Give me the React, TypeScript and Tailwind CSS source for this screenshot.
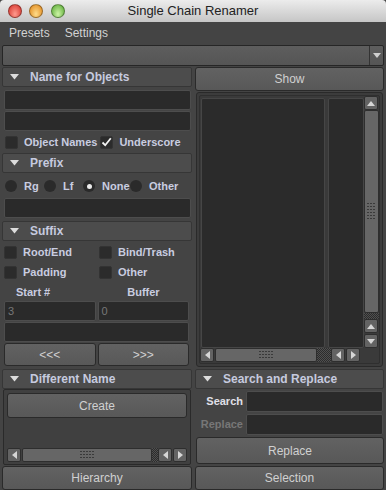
import clsx from 'clsx'

const LABEL = 'text-[11px] font-bold text-[#c9cde0]'

function Tri({ dir, color = '#d6d6d6' }: { dir: 'up' | 'down' | 'left' | 'right'; color?: string }) {
  const d = {
    up: 'M0 5L4 0L8 5z',
    down: 'M0 0h8L4 5z',
    left: 'M5 0v8L0 4z',
    right: 'M0 0v8L5 4z',
  }[dir]
  const vertical = dir === 'up' || dir === 'down'
  return (
    <svg width={vertical ? 8 : 5} height={vertical ? 5 : 8} viewBox={vertical ? '0 0 8 5' : '0 0 5 8'}>
      <path d={d} fill={color} />
    </svg>
  )
}

function Grip({ cols, rows }: { cols: number; rows: number }) {
  const dots = []
  for (let r = 0; r < rows; r++)
    for (let c = 0; c < cols; c++)
      dots.push(<rect key={`${r}-${c}`} x={c * 3} y={r * 3} width="2" height="1" fill="#3a3a3a" />)
  return (
    <svg width={cols * 3} height={rows * 3}>
      {dots}
    </svg>
  )
}

function ArrowBtn({ dir }: { dir: 'up' | 'down' | 'left' | 'right' }) {
  return (
    <div className="flex h-[14px] w-[14px] shrink-0 items-center justify-center rounded-[2px] border border-[#2e2e2e] bg-[#636363]">
      <Tri dir={dir} />
    </div>
  )
}

const CHECKER =
  'bg-[repeating-conic-gradient(#2c2c2c_0%_25%,#505050_0%_50%)] bg-[length:2px_2px]'

function HScroll({ thumb, checker }: { thumb: string; checker: string }) {
  return (
    <div className="flex h-[14px] items-center">
      <ArrowBtn dir="left" />
      <div className={clsx('ml-[1px] flex h-[14px] items-center justify-center rounded-[2px] border border-[#2e2e2e] bg-[#666]', thumb)}>
        <Grip cols={5} rows={3} />
      </div>
      <div className={clsx('h-[14px]', CHECKER, checker)} />
      <ArrowBtn dir="left" />
      <div className="ml-[1px]">
        <ArrowBtn dir="right" />
      </div>
    </div>
  )
}

function Header({ title }: { title: string }) {
  return (
    <div className="flex h-[20px] items-center rounded-[2px] border border-[#363636] bg-[#4c4c4c]">
      <svg className="ml-[7px]" width="9" height="6" viewBox="0 0 9 6">
        <path d="M0 0h9L4.5 5.5z" fill="#dcdcdc" />
      </svg>
      <span className="ml-[11px] text-[12px] font-bold text-[#c6cadf]">{title}</span>
    </div>
  )
}

function Field({ className, value, dim }: { className?: string; value?: string; dim?: boolean }) {
  return (
    <div
      className={clsx(
        'flex h-[20px] items-center rounded-[2px] border border-[#4d4d4d] bg-[#2a2a2a] pl-[3px] text-[11px]',
        dim ? 'text-[#777]' : 'text-[#bbb]',
        className
      )}
    >
      {value}
    </div>
  )
}

function Check({ label, checked }: { label: string; checked?: boolean }) {
  return (
    <div className="flex items-center">
      <span className="flex h-[13px] w-[13px] items-center justify-center rounded-[2px] border border-[#333] bg-[#2b2b2b]">
        {checked && (
          <svg width="11" height="10" viewBox="0 0 11 10">
            <path d="M1.5 5.5L4.2 8.2L9.8 1.2" stroke="#f2f2f2" strokeWidth="1.8" fill="none" />
          </svg>
        )}
      </span>
      <span className={clsx(LABEL, 'ml-[6px]')}>{label}</span>
    </div>
  )
}

function Radio({ label, on }: { label: string; on?: boolean }) {
  return (
    <div className="flex items-center">
      <span className="flex h-[12px] w-[12px] items-center justify-center rounded-full bg-[#2a2a2a]">
        {on && <span className="h-[5px] w-[5px] rounded-full bg-[#ececec]" />}
      </span>
      <span className={clsx(LABEL, 'ml-[7px]')}>{label}</span>
    </div>
  )
}

function Btn({ label, className }: { label: string; className?: string }) {
  return (
    <div
      className={clsx(
        'flex items-center justify-center rounded-[3px] border border-[#2a2a2a] bg-gradient-to-b from-[#626262] to-[#585858] text-[12px] text-[#d0d0d0]',
        className
      )}
    >
      {label}
    </div>
  )
}

function Light({ from, to }: { from: string; to: string }) {
  return (
    <div
      className={clsx('h-[14px] w-[14px] rounded-full border border-[#00000055] bg-radial-[at_50%_75%]', from, to)}
    />
  )
}

export default function App() {
  return (
    <div className="h-[490px] w-[386px] overflow-hidden bg-[#444] font-['Liberation_Sans',Arial,sans-serif]">
      {/* title bar */}
      <div className="relative flex h-[22px] items-center rounded-t-[4px] bg-gradient-to-b from-[#ececec] to-[#c6c6c6]">
        <div className="ml-[8px] flex gap-[7px]">
          <Light from="from-[#ff9a8e]" to="to-[#d42f27]" />
          <Light from="from-[#ffdc8a]" to="to-[#df8416]" />
          <div className="ml-[1px]">
            <Light from="from-[#cdf4a6]" to="to-[#55a830]" />
          </div>
        </div>
        <span className="absolute left-0 right-0 text-center text-[13px] text-[#222]">
          Single Chain Renamer
        </span>
      </div>

      {/* menu bar */}
      <div className="flex h-[22px] items-center gap-[15px] pl-[9px] text-[12px] text-[#d2d2d2]">
        <span>Presets</span>
        <span>Settings</span>
      </div>

      {/* option menu */}
      <div className="mx-[2px] mt-[1px] flex h-[21px] rounded-[2px] border border-[#262626] bg-gradient-to-b from-[#5e5e5e] to-[#555]">
        <div className="flex-1" />
        <div className="flex w-[14px] items-center justify-center border-l border-[#333]">
          <Tri dir="down" color="#d0d0d0" />
        </div>
      </div>

      <div className="flex">
        {/* left column */}
        <div className="w-[193px] shrink-0">
          <div className="ml-[2px] mr-[1px] mt-[1px]">
            <Header title="Name for Objects" />
          </div>
          <div className="px-[4px] pr-[2px]">
            <Field className="mt-[3px]" />
            <Field className="mt-[1px]" />
          </div>
          <div className="ml-[5px] mt-[2px] flex h-[18px] items-center">
            <Check label="Object Names" />
            <span className="ml-[3px]">
              <Check label="Underscore" checked />
            </span>
          </div>

          <div className="ml-[2px] mr-[1px] mt-[2px]">
            <Header title="Prefix" />
          </div>
          <div className="ml-[5px] mt-[2px] flex h-[22px] items-center">
            <div className="w-[39px]">
              <Radio label="Rg" />
            </div>
            <div className="w-[39px]">
              <Radio label="Lf" />
            </div>
            <div className="w-[47px]">
              <Radio label="None" on />
            </div>
            <Radio label="Other" />
          </div>
          <div className="px-[4px] pr-[2px]">
            <Field className="mt-[1px]" />
          </div>

          <div className="ml-[2px] mr-[1px] mt-[3px]">
            <Header title="Suffix" />
          </div>
          <div className="ml-[4px] mt-[1px] grid h-[20px] grid-cols-[95px_1fr] items-center">
            <Check label="Root/End" />
            <Check label="Bind/Trash" />
          </div>
          <div className="ml-[4px] grid h-[21px] grid-cols-[95px_1fr] items-center">
            <Check label="Padding" />
            <Check label="Other" />
          </div>
          <div className="mt-[1px] flex h-[17px] items-center">
            <span className={clsx(LABEL, 'ml-[16px]')}>Start #</span>
            <span className={clsx(LABEL, 'ml-[77px]')}>Buffer</span>
          </div>
          <div className="grid grid-cols-2 gap-[2px] px-[4px] pr-[4px]">
            <Field value="3" dim />
            <Field value="0" dim />
          </div>
          <div className="px-[4px] pr-[4px]">
            <Field className="mt-[1px]" />
          </div>
          <div className="mt-[1px] grid grid-cols-2 gap-[2px] px-[4px] pr-[4px]">
            <Btn label="<<<" className="h-[23px]" />
            <Btn label=">>>" className="h-[23px]" />
          </div>

          <div className="ml-[2px] mr-[1px] mt-[3px]">
            <Header title="Different Name" />
          </div>
          <div className="ml-[3px] mr-[2px] flex h-[76px] flex-col rounded-[2px] border border-[#2a2a2a] bg-[#404040] px-[3px] pt-[3px]">
            <Btn label="Create" className="h-[25px]" />
            <div className="mt-auto mb-[2px]">
              <HScroll thumb="w-[130px]" checker="w-[6px]" />
            </div>
          </div>
          <div className="ml-[2px] mr-[1px] mt-[1px]">
            <Btn label="Hierarchy" className="h-[24px]" />
          </div>
        </div>

        {/* right column */}
        <div className="flex-1">
          <div className="ml-[2px] mr-[3px] mt-[1px]">
            <Btn label="Show" className="h-[24px]" />
          </div>
          <div className="ml-[3px] mr-[4px] mt-[1px] h-[275px] rounded-[3px] border border-[#2a2a2a] bg-[#3c3c3c] p-[2px]">
            <div className="flex h-full flex-col rounded-[2px] border border-[#2f2f2f] bg-[#3a3a3a]">
              <div className="flex flex-1">
                <div className="ml-[1px] mt-[2px] w-[124px] rounded-[2px] border border-[#464646] bg-[#2b2b2b]" />
                <div className="ml-[3px] mt-[2px] w-[36px] rounded-[2px] border border-[#464646] bg-[#2b2b2b]" />
                <div className="flex w-[15px] flex-col">
                  <ArrowBtn dir="up" />
                  <div className="flex flex-1 items-center justify-center rounded-[2px] border border-[#2e2e2e] bg-[#666]">
                    <Grip cols={3} rows={6} />
                  </div>
                  <div className={clsx('h-[6px]', CHECKER)} />
                  <ArrowBtn dir="up" />
                  <div className="mt-[1px]">
                    <ArrowBtn dir="down" />
                  </div>
                </div>
              </div>
              <div className="mb-[1px]">
                <HScroll thumb="w-[102px]" checker="w-[14px]" />
              </div>
            </div>
          </div>

          <div className="ml-[2px] mr-[3px] mt-[2px]">
            <Header title="Search and Replace" />
          </div>
          <div className="mt-[2px] flex h-[21px] items-center">
            <span className={clsx(LABEL, 'w-[50px] text-right text-[#e0e0e8]')}>Search</span>
            <Field className="ml-[3px] mr-[4px] h-[21px] flex-1" />
          </div>
          <div className="mt-[2px] flex h-[21px] items-center">
            <span className="w-[50px] text-right text-[11px] font-bold text-[#777]">Replace</span>
            <Field className="ml-[3px] mr-[4px] h-[21px] flex-1" />
          </div>
          <div className="ml-[3px] mr-[3px] mt-[2px]">
            <Btn label="Replace" className="h-[27px]" />
          </div>
          <div className="ml-[2px] mr-[3px] mt-[2px]">
            <Btn label="Selection" className="h-[24px]" />
          </div>
        </div>
      </div>
    </div>
  )
}
